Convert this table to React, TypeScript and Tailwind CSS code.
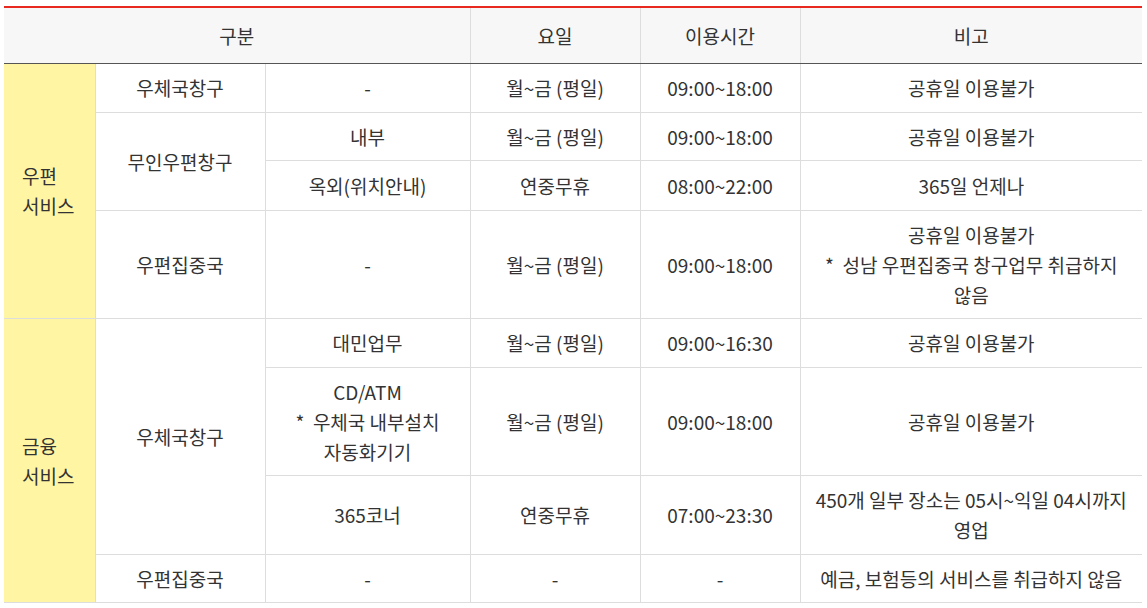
const cell = 'border border-[#dddddd] px-[10px] py-[8px] text-center align-middle'
const side = 'border-y border-r border-[#dddddd] bg-[#fff5a3] pl-[18px] text-left align-middle'
const last = cell + ' border-r-0'
const head = 'border-b border-r border-b-[#555555] border-r-[#dddddd] pt-[13px] pb-[12px] font-normal'

function Holiday() {
  return <>공휴일 이용불가</>
}

export default function App() {
  return (
    <div
      className="bg-white pl-[4px] pt-[6px] text-[19px] leading-[30px] text-[#333333]"
      style={{ fontFamily: '"Noto Sans CJK KR", "Noto Sans", sans-serif' }}
    >
      <table className="w-[1138px] table-fixed border-collapse border-t-2 border-b border-t-[#e8291f] border-b-[#555555]">
        <colgroup>
          <col className="w-[91px]" />
          <col className="w-[170px]" />
          <col className="w-[205px]" />
          <col className="w-[170px]" />
          <col className="w-[160px]" />
          <col className="w-[342px]" />
        </colgroup>
        <thead>
          <tr className="bg-[#f7f7f7]">
            <th colSpan={3} className={head}>
              구분
            </th>
            <th className={head}>요일</th>
            <th className={head}>이용시간</th>
            <th className={head + ' border-r-0'}>비고</th>
          </tr>
        </thead>
        <tbody>
          <tr className="h-[49px]">
            <td rowSpan={4} className={side}>
              우편
              <br />
              서비스
            </td>
            <td className={cell}>우체국창구</td>
            <td className={cell}>-</td>
            <td className={cell}>월~금 (평일)</td>
            <td className={cell}>09:00~18:00</td>
            <td className={last}><Holiday /></td>
          </tr>
          <tr className="h-[48px]">
            <td rowSpan={2} className={cell}>무인우편창구</td>
            <td className={cell}>내부</td>
            <td className={cell}>월~금 (평일)</td>
            <td className={cell}>09:00~18:00</td>
            <td className={last}><Holiday /></td>
          </tr>
          <tr className="h-[50px]">
            <td className={cell}>옥외(위치안내)</td>
            <td className={cell}>연중무휴</td>
            <td className={cell}>08:00~22:00</td>
            <td className={last}>365일 언제나</td>
          </tr>
          <tr className="h-[108px]">
            <td className={cell}>우편집중국</td>
            <td className={cell}>-</td>
            <td className={cell}>월~금 (평일)</td>
            <td className={cell}>09:00~18:00</td>
            <td className={last}>
              <Holiday />
              <br />* &nbsp;성남 우편집중국 창구업무 취급하지
              <br />
              않음
            </td>
          </tr>
          <tr className="h-[49px]">
            <td rowSpan={4} className={side}>
              금융
              <br />
              서비스
            </td>
            <td rowSpan={3} className={cell}>우체국창구</td>
            <td className={cell}>대민업무</td>
            <td className={cell}>월~금 (평일)</td>
            <td className={cell}>09:00~16:30</td>
            <td className={last}><Holiday /></td>
          </tr>
          <tr className="h-[108px]">
            <td className={cell}>
              CD/ATM
              <br />* &nbsp;우체국 내부설치
              <br />
              자동화기기
            </td>
            <td className={cell}>월~금 (평일)</td>
            <td className={cell}>09:00~18:00</td>
            <td className={last}><Holiday /></td>
          </tr>
          <tr className="h-[79px]">
            <td className={cell}>365코너</td>
            <td className={cell}>연중무휴</td>
            <td className={cell}>07:00~23:30</td>
            <td className={last}>
              450개 일부 장소는 05시~익일 04시까지
              <br />
              영업
            </td>
          </tr>
          <tr className="h-[48px]">
            <td className={cell}>우편집중국</td>
            <td className={cell}>-</td>
            <td className={cell}>-</td>
            <td className={cell}>-</td>
            <td className={last}>예금, 보험등의 서비스를 취급하지 않음</td>
          </tr>
        </tbody>
      </table>
    </div>
  )
}
